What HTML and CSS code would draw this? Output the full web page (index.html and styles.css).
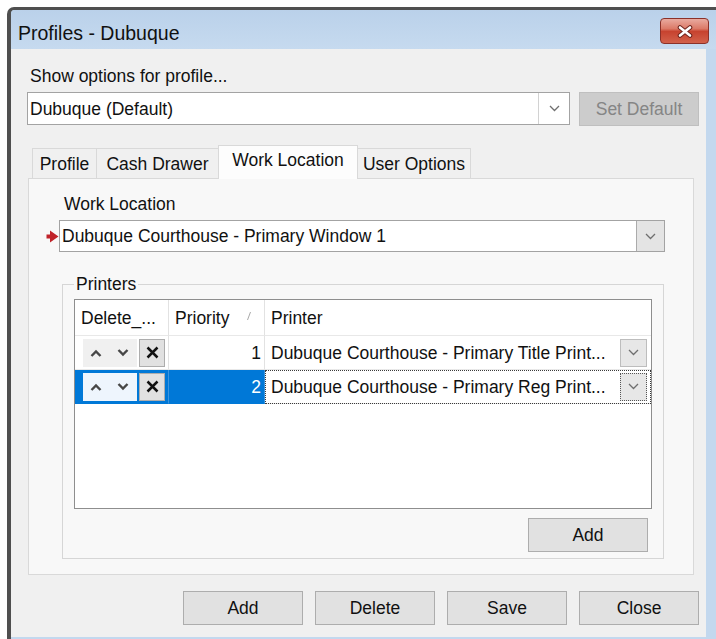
FILE: index.html
```html
<!DOCTYPE html>
<html lang="en">
<head>
<meta charset="utf-8">
<title>Profiles - Dubuque</title>
<link rel="stylesheet" href="styles.css">
</head>
<body>
<div class="window">
  <div class="titlebar">
    <span class="title">Profiles - Dubuque</span>
    <button class="close-btn" aria-label="Close">
      <svg width="18" height="13" viewBox="0 0 18 13">
        <path d="M4 2.5 L14 10.5 M14 2.5 L4 10.5" stroke="#6e241d" stroke-width="4.6" stroke-linecap="round"/>
        <path d="M4 2.5 L14 10.5 M14 2.5 L4 10.5" stroke="#ffffff" stroke-width="2.6" stroke-linecap="round"/>
      </svg>
    </button>
  </div>

  <div class="client">
    <div class="field-label">Show options for profile...</div>
    <div class="profile-row">
      <div class="combo profile-combo">
        <span class="combo-text">Dubuque (Default)</span>
        <span class="combo-arrow">
          <svg width="11" height="7" viewBox="0 0 11 7"><polyline points="1,1 5.5,5.5 10,1" fill="none" stroke="#6f6f6f" stroke-width="1.3"/></svg>
        </span>
      </div>
      <button class="btn" disabled>Set Default</button>
    </div>

    <div class="tabs">
      <div class="tab tab-profile">Profile</div>
      <div class="tab tab-cash">Cash Drawer</div>
      <div class="tab tab-location active">Work Location</div>
      <div class="tab tab-user">User Options</div>
    </div>

    <div class="tab-page">
      <div class="field-label page-label">Work Location</div>
      <div class="location-row">
        <svg class="row-marker" width="13" height="13" viewBox="0 0 13 13">
          <polygon points="0.5,4.5 4,4.5 4,0.5 12.5,6.5 4,12.5 4,8.5 0.5,8.5" fill="#c0232a"/>
        </svg>
        <div class="combo location-combo">
          <span class="combo-text">Dubuque Courthouse - Primary Window 1</span>
          <span class="combo-arrow boxed">
            <svg width="11" height="7" viewBox="0 0 11 7"><polyline points="1,1 5.5,5.5 10,1" fill="none" stroke="#6f6f6f" stroke-width="1.3"/></svg>
          </span>
        </div>
      </div>

      <fieldset class="group">
        <legend>Printers</legend>
        <div class="grid">
          <div class="cell head">Delete_...</div>
          <div class="cell head head-priority">Priority
            <svg class="sort-glyph" width="6" height="10" viewBox="0 0 6 10"><line x1="4.5" y1="1" x2="1.5" y2="9" stroke="#a9a9a9" stroke-width="1"/></svg>
          </div>
          <div class="cell head last">Printer</div>

          <div class="cell actions-cell">
            <span class="mini up"><svg width="12" height="8" viewBox="0 0 12 8"><polyline points="1.5,7 6,2.5 10.5,7" fill="none" stroke="#474747" stroke-width="2.4"/></svg></span>
            <span class="mini down"><svg width="12" height="8" viewBox="0 0 12 8"><polyline points="1.5,1 6,5.5 10.5,1" fill="none" stroke="#474747" stroke-width="2.4"/></svg></span>
            <span class="mini del"><svg width="13" height="13" viewBox="0 0 13 13"><path d="M1.5 1.5 L11.5 11.5 M11.5 1.5 L1.5 11.5" stroke="#111" stroke-width="2.5"/></svg></span>
          </div>
          <div class="cell num-cell">1</div>
          <div class="cell printer-cell last">
            <span class="printer-name">Dubuque Courthouse - Primary Title Print...</span>
            <span class="drop"><svg width="11" height="7" viewBox="0 0 11 7"><polyline points="1,1 5.5,5.5 10,1" fill="none" stroke="#6f6f6f" stroke-width="1.3"/></svg></span>
          </div>

          <div class="cell actions-cell selected">
            <span class="mini up"><svg width="12" height="8" viewBox="0 0 12 8"><polyline points="1.5,7 6,2.5 10.5,7" fill="none" stroke="#474747" stroke-width="2.4"/></svg></span>
            <span class="mini down"><svg width="12" height="8" viewBox="0 0 12 8"><polyline points="1.5,1 6,5.5 10.5,1" fill="none" stroke="#474747" stroke-width="2.4"/></svg></span>
            <span class="mini del"><svg width="13" height="13" viewBox="0 0 13 13"><path d="M1.5 1.5 L11.5 11.5 M11.5 1.5 L1.5 11.5" stroke="#111" stroke-width="2.5"/></svg></span>
          </div>
          <div class="cell num-cell selected">2</div>
          <div class="cell printer-cell last focused">
            <span class="printer-name">Dubuque Courthouse - Primary Reg Print...</span>
            <span class="drop"><svg width="11" height="7" viewBox="0 0 11 7"><polyline points="1,1 5.5,5.5 10,1" fill="none" stroke="#6f6f6f" stroke-width="1.3"/></svg></span>
          </div>
        </div>
        <div class="group-actions">
          <button class="btn">Add</button>
        </div>
      </fieldset>
    </div>

    <div class="dialog-actions">
      <button class="btn">Add</button>
      <button class="btn">Delete</button>
      <button class="btn">Save</button>
      <button class="btn">Close</button>
    </div>
  </div>
</div>
</body>
</html>
```

FILE: styles.css
```css
html, body {
  margin: 0;
  background: #ffffff;
  overflow: hidden;
}

body {
  font-family: "Liberation Sans", Arial, sans-serif;
  font-size: 17.5px;
  color: #111;
}

/* ---- window frame ---- */
.window {
  box-sizing: border-box;
  width: 709px;
  height: 632px;
  margin: 7px 0 0 7px;
  border-top: 3px solid #4f4f4f;
  border-left: 4px solid #4f4f4f;
  border-top-left-radius: 7px;
  background: #c3d8ee;
  display: flex;
  flex-direction: column;
}

.titlebar {
  flex: none;
  height: 39px;
  box-sizing: border-box;
  display: flex;
  align-items: flex-start;
  padding: 0 7px 0 7px;
  background: linear-gradient(#bad1ea, #c6daef);
  border-top-left-radius: 4px;
}

.title {
  font-size: 19.5px;
  line-height: 22px;
  margin-top: 12px;
  color: #111;
}

.close-btn {
  margin: 8px 0 0 auto;
  width: 49px;
  height: 26px;
  padding: 0;
  box-sizing: border-box;
  border: 1px solid #8b3129;
  border-radius: 4px;
  background: linear-gradient(#e9aa9f 0%, #dc7a68 40%, #c7432f 52%, #d2614b 100%);
  display: flex;
  align-items: center;
  justify-content: center;
}

/* ---- client area ---- */
.client {
  flex: none;
  height: 588px;
  margin-right: 10px;
  box-sizing: border-box;
  padding: 17px 7px 12px 16px;
  background: #f0f0f0;
}

.field-label {
  line-height: 20px;
  margin-left: 3px;
}

.profile-row {
  display: flex;
  align-items: flex-start;
  gap: 9px;
  height: 34px;
  margin-top: 6px;
}

.combo {
  box-sizing: border-box;
  display: flex;
  background: #fff;
  border: 1px solid #a3a3a3;
}

.combo-text {
  flex: 1;
  display: flex;
  align-items: center;
  padding-left: 2px;
  line-height: 20px;
  white-space: nowrap;
}

.combo-arrow {
  flex: none;
  width: 30px;
  display: flex;
  align-items: center;
  justify-content: center;
  border-left: 1px solid #d2d2d2;
}

.combo-arrow.boxed {
  width: 27px;
  background: #e4e4e4;
  border-left: 1px solid #ababab;
}

.profile-combo {
  width: 543px;
  height: 33px;
}

.btn {
  box-sizing: border-box;
  width: 120px;
  height: 34px;
  padding: 0;
  border: 1px solid #adadad;
  background: #e1e1e1;
  font: inherit;
  color: #111;
}

.btn:disabled {
  background: #cccccc;
  border-color: #bfbfbf;
  color: #858585;
}

/* ---- tabs ---- */
.tabs {
  display: flex;
  align-items: flex-end;
  height: 33px;
  margin: 19px 0 0 5px;
}

.tab {
  box-sizing: border-box;
  height: 30px;
  margin-right: -1px;
  padding-top: 5px;
  border: 1px solid #d9d9d9;
  border-bottom: none;
  background: #f0f0f0;
  line-height: 20px;
  text-align: center;
  white-space: nowrap;
}

.tab-profile { width: 65px; }
.tab-cash { width: 123px; }
.tab-location { width: 140px; }
.tab-user { width: 114px; }

.tab.active {
  position: relative;
  z-index: 1;
  height: 34px;
  margin-bottom: -1px;
  padding-top: 4px;
  background: #fdfdfd;
}

.tab-page {
  box-sizing: border-box;
  width: 666px;
  height: 397px;
  margin-left: 1px;
  padding: 15px 0 0 17px;
  border: 1px solid #d9d9d9;
  background: #f8f8f8;
}

.page-label {
  margin-left: 18px;
}

.location-row {
  display: flex;
  align-items: center;
  margin-top: 6px;
}

.row-marker {
  flex: none;
}

.location-combo {
  width: 606px;
  height: 32px;
}

/* ---- printers group ---- */
.group {
  box-sizing: border-box;
  width: 602px;
  min-width: 0;
  margin: 22px 0 0 16px;
  padding: 5px 11px 6px 11px;
  border: 1px solid #d6d6d6;
}

.group legend {
  padding: 0 2px;
  line-height: 20px;
}

.grid {
  box-sizing: border-box;
  width: 578px;
  height: 210px;
  border: 1px solid #8e8e8e;
  background: #fff;
  display: grid;
  grid-template-columns: 94px 96px 386px;
  grid-template-rows: 36px 34px 34px;
  align-content: start;
}

.cell {
  box-sizing: border-box;
  display: flex;
  align-items: center;
  border-right: 1px solid #e2e2e2;
  border-bottom: 1px solid #e8e8e8;
  line-height: 20px;
  white-space: nowrap;
  overflow: hidden;
}

.cell.last {
  border-right: none;
}

.head {
  padding-left: 6px;
}

.sort-glyph {
  margin: -4px 12px 0 auto;
}

.actions-cell {
  padding-left: 8px;
}

.mini {
  box-sizing: border-box;
  width: 26px;
  height: 28px;
  display: flex;
  align-items: center;
  justify-content: center;
  background: #f0f0f0;
}

.mini.down {
  width: 28px;
}

.mini.del {
  margin-left: 2px;
  background: #e1e1e1;
  border: 1px solid #adadad;
}

.num-cell {
  justify-content: flex-end;
  padding-right: 3px;
}

.printer-cell {
  padding: 0 4px 0 6px;
}

.printer-name {
  overflow: hidden;
}

.drop {
  flex: none;
  box-sizing: border-box;
  width: 27px;
  height: 28px;
  margin-left: auto;
  display: flex;
  align-items: center;
  justify-content: center;
  background: #e7e7e7;
  border: 1px solid #bdbdbd;
}

.selected {
  background: #0078d7;
  color: #fff;
  border-right-color: #3d95de;
  border-bottom-color: #0078d7;
}

.selected .mini.up,
.selected .mini.down {
  background: #eef5fd;
}

.focused {
  outline: 1px dotted #3a3a3a;
  outline-offset: -1px;
}

.focused .drop {
  border: 1px dotted #555;
}

.group-actions {
  display: flex;
  justify-content: flex-end;
  margin-top: 9px;
  padding-right: 4px;
}

/* ---- dialog buttons ---- */
.dialog-actions {
  display: flex;
  justify-content: flex-end;
  gap: 12px;
  margin-top: 16px;
}
```
